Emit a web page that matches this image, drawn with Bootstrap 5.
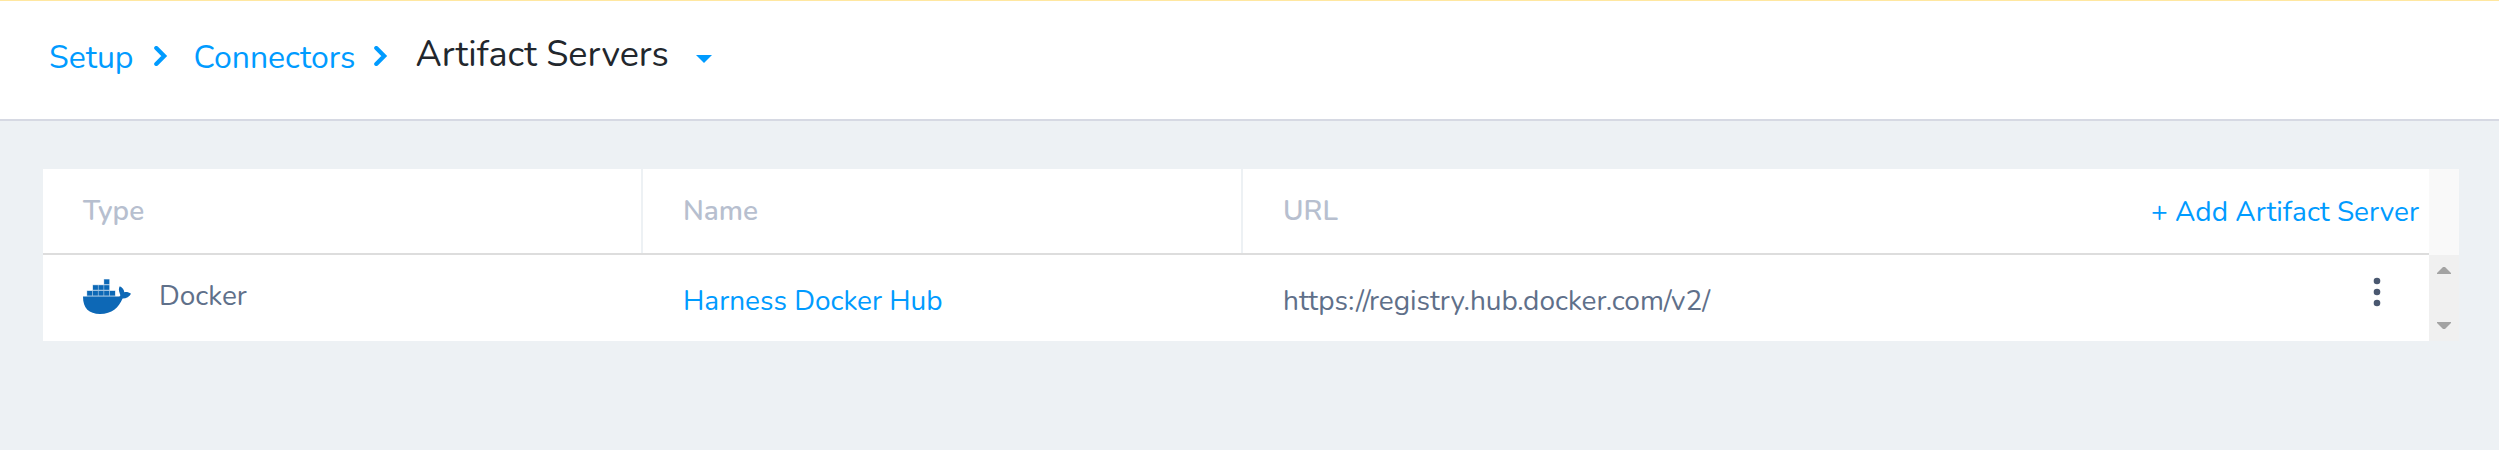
<!DOCTYPE html>
<html lang="en">
<head>
<meta charset="utf-8">
<meta name="viewport" content="width=device-width, initial-scale=1">
<title>Artifact Servers</title>
<link href="https://cdn.jsdelivr.net/npm/bootstrap@5.3.0/dist/css/bootstrap.min.css" rel="stylesheet">
<style>
  body { font-family: "Nunito", "Lato", sans-serif; font-size: 28px; line-height: 44px; color: #5f708a; background: #edf1f4; min-height: 450px; overflow: hidden; }
  a { color: #009bff; text-decoration: none; }
  svg { display: block; flex: none; }
  .topbar { height: 121px; border-top: 1px solid #ffe7a0; border-bottom: 2px solid #d6d9e3; padding: 35px 0 0 49px; }
  .crumb { font-size: 32px; }
  .chev { margin-top: 10px; }
  .page-title { font-size: 36px; line-height: 44px; font-weight: 400; color: #22272d; margin: -3px 0 0 27px; }
  .panel { margin: 48px 40px 0 43px; height: 172px; }
  .head-row { height: 86px; border-bottom: 2px solid #ddd; color: #b7bfcf; font-weight: 600; }
  .head-row a { font-weight: 400; padding-top: 2px; }
  .data-row { height: 86px; }
  .cell { width: 600px; padding-left: 40px; }
  .head-row .cell { border-right: 2px solid #edf1f4; }
  .last-cell { padding: 0 10px 0 40px; }
  .scroll-head { height: 86px; background: #f9f9f9; }
  .scroll-track { height: 86px; background: #f0f0f0; padding: 12px 8px; }
  .gutter { width: 30px; }
</style>
</head>
<body>
<header class="topbar bg-white d-flex align-items-start">
  <a href="#" class="crumb">Setup</a>
  <svg class="chev" style="margin-left:20px" width="14" height="20" viewBox="0 0 14 20"><path d="M2.3 2.1 10.2 10 2.3 17.9" fill="none" stroke="#009bff" stroke-width="4.2" stroke-linejoin="miter" stroke-linecap="round"/></svg>
  <a href="#" class="crumb" style="margin-left:26px">Connectors</a>
  <svg class="chev" style="margin-left:19px" width="14" height="20" viewBox="0 0 14 20"><path d="M2.3 2.1 10.2 10 2.3 17.9" fill="none" stroke="#009bff" stroke-width="4.2" stroke-linejoin="miter" stroke-linecap="round"/></svg>
  <h1 class="page-title">Artifact Servers</h1>
  <svg style="margin:19px 0 0 27px" width="16" height="8" viewBox="0 0 16 8"><path d="M0 0H16L8 8Z" fill="#009bff"/></svg>
</header>

<main class="panel d-flex">
  <section class="flex-grow-1 bg-white">
    <div class="head-row d-flex align-items-stretch">
      <div class="cell d-flex align-items-center">Type</div>
      <div class="cell d-flex align-items-center">Name</div>
      <div class="last-cell flex-grow-1 d-flex align-items-center justify-content-between">
        <span>URL</span>
        <a href="#">+ Add Artifact Server</a>
      </div>
    </div>
    <div class="data-row d-flex align-items-center">
      <div class="cell d-flex align-items-center pb-1">
        <svg style="margin-top:2px" width="48" height="36" viewBox="0 0 48 36">
          <g fill="#0d68b6">
            <path d="M0 17.6H36C37.4 17.2 37.6 16.5 36.8 14.4 35.6 11.2 35.6 9.4 36.8 7.2 40 8.6 41 11 41.3 13.2 44 12.9 46.2 13.4 48 14.8 46.4 18 43.6 19.4 39.6 19.6 35.6 29 29 35 17 35 6 35 0 29.6 0 17.6Z"/>
            <path d="M21.2 .4h5v4.6h-5zM10 6.2h4.9v4.6H10zM15.6 6.2h4.9v4.6h-4.9zM21.2 6.2h5v4.6h-5zM4.2 12h5v4.6h-5zM10 12h4.9v4.6H10zM15.6 12h4.9v4.6h-4.9zM21.2 12h5v4.6h-5zM27 12h5v4.6h-5z"/>
            <path opacity=".4" d="M20.8 0H26.6V11.6H32.4V17.6H3.8V11.6H9.6V5.8H20.8Z"/>
          </g>
        </svg>
        <span style="margin-left:28px">Docker</span>
      </div>
      <div class="cell" style="padding-top:6px"><a href="#">Harness Docker Hub</a></div>
      <div class="last-cell flex-grow-1 d-flex align-items-center justify-content-between">
        <span style="padding-top:6px">https://registry.hub.docker.com/v2/</span>
        <svg style="margin:-13px 38px 0 0" width="8" height="30" viewBox="0 0 8 30"><g fill="#4a5870"><circle cx="4" cy="4" r="3.3"/><circle cx="4" cy="15" r="3.3"/><circle cx="4" cy="26" r="3.3"/></g></svg>
      </div>
    </div>
  </section>
  <aside class="gutter">
    <div class="scroll-head"></div>
    <div class="scroll-track d-flex flex-column justify-content-between">
      <svg width="14" height="7" viewBox="0 0 14 7"><path d="M0 7V6L6 0H8L14 6V7Z" fill="#a3a3a3"/></svg>
      <svg width="14" height="7" viewBox="0 0 14 7"><path d="M0 0V1L6 7H8L14 1V0Z" fill="#a3a3a3"/></svg>
    </div>
  </aside>
</main>
<script src="https://cdn.jsdelivr.net/npm/bootstrap@5.3.0/dist/js/bootstrap.bundle.min.js"></script>
</body>
</html>
